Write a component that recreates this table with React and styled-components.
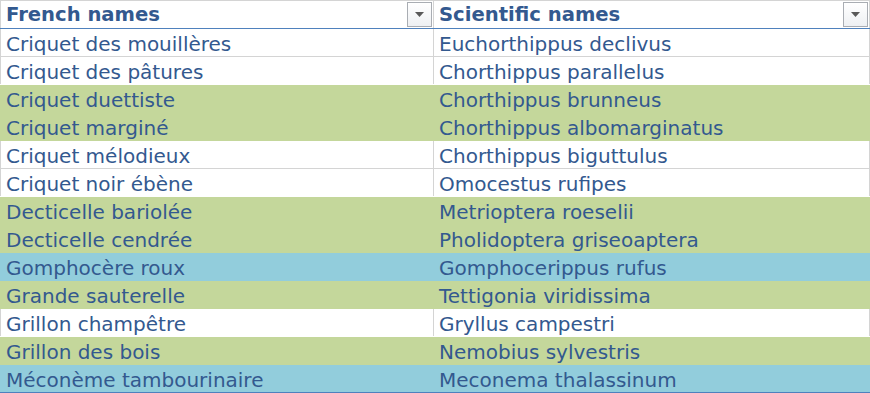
import React from "react";
import styled, { createGlobalStyle } from "styled-components";

const GlobalStyle = createGlobalStyle`
  body {
    margin: 0;
    background: #ffffff;
  }
`;

const GRID = "#d4d4d4";
const ACCENT = "#4f81bd";
const FILLS = {
  white: "#ffffff",
  green: "#c4d79b",
  blue: "#92cddc",
};

const rows = [
  ["Criquet des mouillères", "Euchorthippus declivus", "white"],
  ["Criquet des pâtures", "Chorthippus parallelus", "white"],
  ["Criquet duettiste", "Chorthippus brunneus", "green"],
  ["Criquet marginé", "Chorthippus albomarginatus", "green"],
  ["Criquet mélodieux", "Chorthippus biguttulus", "white"],
  ["Criquet noir ébène", "Omocestus rufipes", "white"],
  ["Decticelle bariolée", "Metrioptera roeselii", "green"],
  ["Decticelle cendrée", "Pholidoptera griseoaptera", "green"],
  ["Gomphocère roux", "Gomphocerippus rufus", "blue"],
  ["Grande sauterelle", "Tettigonia viridissima", "green"],
  ["Grillon champêtre", "Gryllus campestri", "white"],
  ["Grillon des bois", "Nemobius sylvestris", "green"],
  ["Méconème tambourinaire", "Meconema thalassinum", "blue"],
];

const Table = styled.div`
  width: 870px;
  font-family: "DejaVu Sans", Verdana, sans-serif;
  color: #33598f;
`;

const Row = styled.div`
  display: grid;
  grid-template-columns: 434px 436px;
  height: ${(p) => (p.$header ? "29px" : "28px")};
  box-sizing: border-box;
  background: ${(p) => FILLS[p.$fill]};
  border-top: ${(p) => (p.$header ? `1px solid ${GRID}` : "none")};
  border-bottom: 1px solid ${(p) => p.$bottom};
`;

const Cell = styled.div`
  display: flex;
  align-items: center;
  justify-content: space-between;
  box-sizing: border-box;
  padding: 0 1px 0 5px;
  font-size: ${(p) => (p.$header ? "19.6px" : "20px")};
  line-height: 24px;
  font-weight: ${(p) => (p.$header ? 700 : 400)};
  white-space: nowrap;
  border-right: 1px solid ${(p) => p.$line};
  ${(p) => p.$first && `border-left: 1px solid ${p.$line};`}
`;

const Label = styled.span`
  padding-top: ${(p) => (p.$header ? "1px" : "2px")};
`;

const FilterButton = styled.div`
  width: 25px;
  height: 25px;
  box-sizing: border-box;
  border: 1px solid #a9adb3;
  background: linear-gradient(#ffffff, #eef0f3);
  display: flex;
  align-items: center;
  justify-content: center;
`;

function FilterArrow() {
  return (
    <svg width="9" height="5" viewBox="0 0 9 5">
      <polygon points="0,0 9,0 4.5,5" fill="#595959" />
    </svg>
  );
}

function HeaderCell({ first, children }) {
  return (
    <Cell $header $first={first} $line={GRID}>
      <Label $header>{children}</Label>
      <FilterButton>
        <FilterArrow />
      </FilterButton>
    </Cell>
  );
}

export default function App() {
  return (
    <>
      <GlobalStyle />
      <Table>
        <Row $header $fill="white" $bottom={ACCENT}>
          <HeaderCell first>French names</HeaderCell>
          <HeaderCell>Scientific names</HeaderCell>
        </Row>
        {rows.map(([french, latin, fill], i) => {
          const next = rows[i + 1];
          const line = fill === "white" ? GRID : FILLS[fill];
          let bottom = FILLS[fill];
          if (!next) bottom = ACCENT;
          else if (fill === "white" && next[2] === "white") bottom = GRID;
          return (
            <Row key={french} $fill={fill} $bottom={bottom}>
              <Cell $first $line={line}>
                <Label>{french}</Label>
              </Cell>
              <Cell $line={line}>
                <Label>{latin}</Label>
              </Cell>
            </Row>
          );
        })}
      </Table>
    </>
  );
}
